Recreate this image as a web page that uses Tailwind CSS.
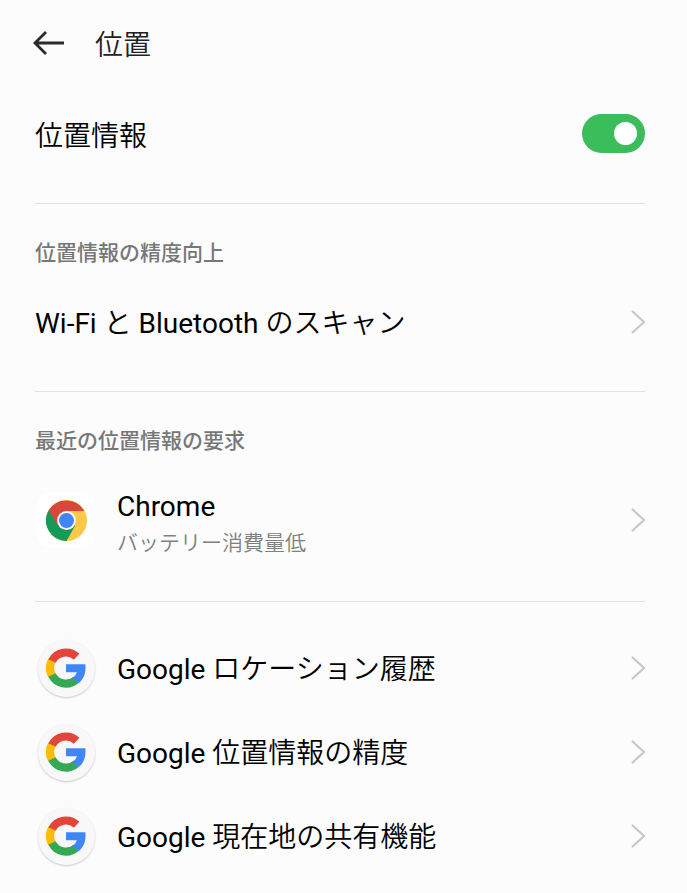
<!doctype html>
<html lang="ja">
  <head>
    <meta charset="UTF-8" />
    <meta name="viewport" content="width=device-width, initial-scale=1.0" />
    <title>位置</title>
    <script src="https://cdn.jsdelivr.net/npm/@tailwindcss/browser@4"></script>
  </head>
  <body class="h-[893px] overflow-hidden bg-[#fcfcfc] font-['Roboto','Noto_Sans_CJK_JP',sans-serif] text-[28px] leading-[40px] text-black">
    <!-- Shared icons -->
    <svg class="hidden">
      <symbol id="chevron" viewBox="0 0 14 26">
        <path d="M1 2 13 13 1 24" fill="none" stroke="#c6c6c6" stroke-width="2" />
      </symbol>
      <symbol id="google" viewBox="0 0 40 40">
        <g fill="none" stroke-width="8.2">
          <path stroke="#fbbc05" d="M6 27.6A15.6 15.6 0 0 1 6 12.4" />
          <path stroke="#e2453a" d="M6 13A15.6 15.6 0 0 1 30.6 8.8" />
          <path stroke="#34a853" d="M6 27A15.6 15.6 0 0 0 29.8 32.1" />
        </g>
        <path fill="#4285f4" d="M20 16.3H39.3C40.3 24.5 37.7 31.2 32.6 35.3L26 30.1C28.6 28.4 30.2 26.4 30.9 24.2H20Z" />
      </symbol>
    </svg>

    <!-- Header -->
    <header class="flex h-[88px] items-center pl-[33px]">
      <svg class="-mt-[2px] h-6 w-8" viewBox="0 0 32 24" fill="none" stroke="#2a2a2a" stroke-width="2.8">
        <path d="M31 12H2M13 1 2 12l11 11" />
      </svg>
      <h1 class="ml-[30px] pt-[3px] font-[350] text-[#222]">位置</h1>
    </header>

    <main class="pr-[42px] pl-[35px]">
      <section class="flex h-[116px] justify-between border-b border-[#e2e2e2] pt-[26px]">
        <span class="pt-[3px] font-[350]">位置情報</span>
        <div class="flex h-[39px] w-[63px] items-center justify-end rounded-full bg-[#3bbd5b] pr-2">
          <div class="size-[23px] rounded-full bg-white"></div>
        </div>
      </section>

      <section class="h-[188px] border-b border-[#e2e2e2] pt-[34px]">
        <h2 class="text-[21px] leading-[30px] font-medium text-[#777]">位置情報の精度向上</h2>
        <div class="mt-[32px] flex items-center justify-between">
          <span class="pt-[4px]">Wi-Fi <span class="font-[350]">と</span> Bluetooth <span class="font-[350]">のスキャン</span></span>
          <svg class="h-[26px] w-[14px]"><use href="#chevron" /></svg>
        </div>
      </section>

      <section class="h-[210px] border-b border-[#e2e2e2] pt-[34px]">
        <h2 class="text-[21px] leading-[30px] font-medium text-[#777]">最近の位置情報の要求</h2>
        <div class="mt-[29px] flex h-[70px] items-center">
          <div class="ml-[3px] flex size-[56px] items-center justify-center rounded-xl bg-white">
            <svg class="size-[41px]" viewBox="0 0 48 48">
              <circle cx="24" cy="24" r="24" fill="#fdc84a" />
              <path d="M24 24 3.2 12A24 24 0 0 0 24 48L34 30Z" fill="#159a58" />
              <path d="M24 13H44.8A24 24 0 0 0 3.2 12L14 30 24 24Z" fill="#d9463a" />
              <circle cx="24" cy="24" r="11" fill="#f6f6f6" />
              <circle cx="24" cy="24" r="8.7" fill="#4285f4" />
            </svg>
          </div>
          <div class="ml-[23px] flex-1 pt-[7px]">
            <div class="leading-[38px]">Chrome</div>
            <div class="text-[21px] leading-[34px] font-[350] text-[#808080]">バッテリー消費量低</div>
          </div>
          <svg class="h-[26px] w-[14px]"><use href="#chevron" /></svg>
        </div>
      </section>

      <section class="pt-6">
        <div class="flex h-[84px] items-center">
          <div class="ml-[3px] flex size-[57px] items-center justify-center rounded-full bg-[#f8f8f8] shadow-[0_1px_2px_#0003]">
            <svg class="mr-px mb-px size-[40px]"><use href="#google" /></svg>
          </div>
          <span class="ml-[22px] flex-1 pt-[4px]">Google <span class="font-[350]">ロケーション履歴</span></span>
          <svg class="h-[26px] w-[14px]"><use href="#chevron" /></svg>
        </div>
        <div class="flex h-[84px] items-center">
          <div class="ml-[3px] flex size-[57px] items-center justify-center rounded-full bg-[#f8f8f8] shadow-[0_1px_2px_#0003]">
            <svg class="mr-px mb-px size-[40px]"><use href="#google" /></svg>
          </div>
          <span class="ml-[22px] flex-1 pt-[4px]">Google <span class="font-[350]">位置情報の精度</span></span>
          <svg class="h-[26px] w-[14px]"><use href="#chevron" /></svg>
        </div>
        <div class="flex h-[84px] items-center">
          <div class="ml-[3px] flex size-[57px] items-center justify-center rounded-full bg-[#f8f8f8] shadow-[0_1px_2px_#0003]">
            <svg class="mr-px mb-px size-[40px]"><use href="#google" /></svg>
          </div>
          <span class="ml-[22px] flex-1 pt-[4px]">Google <span class="font-[350]">現在地の共有機能</span></span>
          <svg class="h-[26px] w-[14px]"><use href="#chevron" /></svg>
        </div>
      </section>
    </main>
  </body>
</html>
